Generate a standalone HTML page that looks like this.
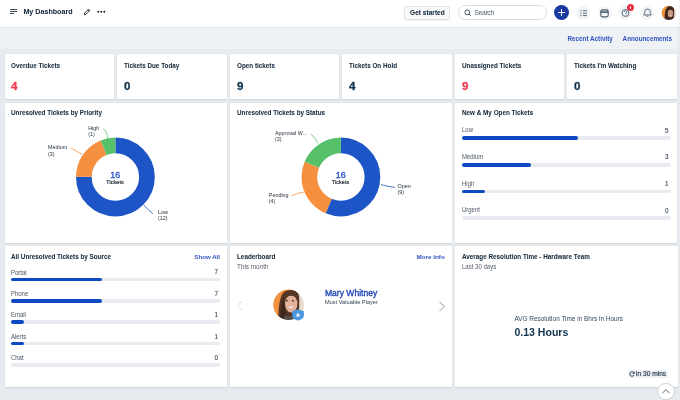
<!DOCTYPE html>
<html><head><meta charset="utf-8">
<style>
*{margin:0;padding:0;box-sizing:border-box}
html,body{width:680px;height:400px;overflow:hidden;background:#e7eaee;font-family:"Liberation Sans",sans-serif;color:#12344d}
.a{position:absolute;white-space:nowrap}
#hdr{position:absolute;left:0;top:0;width:680px;height:28px;background:#fff;border-bottom:1px solid #dfe3e8}
#sub{position:absolute;left:0;top:28px;width:680px;height:21px;background:#eff2f5}
.card{position:absolute;background:#fff;border-radius:1px;box-shadow:0 0.5px 1.2px rgba(18,52,77,.11)}
.t{font-weight:700;font-size:6.5px;letter-spacing:0;transform:scaleX(0.973);transform-origin:0 0;color:#13283b;line-height:1;-webkit-text-stroke:0.04px #13283b}
.lnk{font-weight:700;font-size:6.3px;color:#2f52c0;line-height:1}
.num{font-weight:700;font-size:10.5px;line-height:1;transform:scaleX(1.1);transform-origin:0 0;-webkit-text-stroke:0.3px currentColor}
.lbl{font-size:6.35px;color:#4a5561;line-height:1;transform:scaleX(0.94);transform-origin:0 0}
.track{position:absolute;height:3.6px;margin-top:-0.2px;border-radius:2px;background:#e8ebef}
.fill{position:absolute;left:0;top:0;height:3.6px;border-radius:2px;background:#0f49c2}
.val{width:20px;text-align:right;line-height:1;font-size:6.3px;color:#2c3e50;-webkit-text-stroke:0.08px #2c3e50}
.hic{position:absolute;width:14px;height:14px;border-radius:50%;background:#f3f5f8}
</style></head>
<body><div id="root" style="position:absolute;left:0;top:0;width:680px;height:400px;filter:blur(0.22px);will-change:transform">
<div id="hdr">
  <!-- hamburger -->
  <div class="a" style="left:9.5px;top:8.75px;width:7.4px;height:1.4px;background:#3a4c5f"></div>
  <div class="a" style="left:9.5px;top:10.85px;width:7.4px;height:1.4px;background:#3a4c5f"></div>
  <div class="a" style="left:9.5px;top:13.05px;width:4px;height:1.45px;background:#3a4c5f"></div>
  <div class="a t" style="left:23.4px;top:9.1px;font-size:7.15px;letter-spacing:0;transform:none">My Dashboard</div>
  <!-- pencil -->
  <svg class="a" style="left:83px;top:8px" width="8" height="8" viewBox="0 0 8 8"><path d="M1.2 6.8 L1.6 5.1 L5.6 1.1 L6.9 2.4 L2.9 6.4 Z M4.7 2 L6 3.3" fill="none" stroke="#2a2f35" stroke-width="0.95" stroke-linejoin="round"/></svg>
  <!-- dots -->
  <svg class="a" style="left:96.1px;top:10.4px" width="10" height="4" viewBox="0 0 10 4"><circle cx="2.3" cy="1.8" r="0.95" fill="#15191d"/><circle cx="5.3" cy="1.8" r="0.95" fill="#15191d"/><circle cx="8.3" cy="1.8" r="0.95" fill="#15191d"/></svg>
  <!-- get started -->
  <div class="a" style="left:404.2px;top:6px;width:45.5px;height:14px;border-radius:2px;background:#f7f9fb;border:0.7px solid #e0e5ea;box-shadow:0 0.5px 1px rgba(0,0,0,.05)"></div>
  <div class="a t" style="left:410px;top:10.2px;font-size:6.6px;letter-spacing:0;transform:none">Get started</div>
  <!-- search -->
  <div class="a" style="left:457.8px;top:5.3px;width:89px;height:14.4px;border-radius:7.2px;background:#fff;border:0.7px solid #d7dde4"></div>
  <svg class="a" style="left:464px;top:8.5px" width="8" height="8" viewBox="0 0 8 8"><circle cx="3.3" cy="3.3" r="2.4" fill="none" stroke="#475867" stroke-width="1"/><path d="M5 5 L6.8 6.8" stroke="#475867" stroke-width="1"/></svg>
  <div class="a" style="left:474.2px;top:10.3px;font-size:6.8px;letter-spacing:-0.3px;color:#4f5f6f;line-height:1">Search</div>
  <!-- plus -->
  <div class="a" style="left:554.1px;top:5.1px;width:15px;height:14.9px;border-radius:50%;background:#1a3a9f"></div>
  <div class="a" style="left:558.2px;top:12.2px;width:6.9px;height:1.1px;background:#f4f6fb"></div>
  <div class="a" style="left:561.1px;top:9.2px;width:1.1px;height:7px;background:#f4f6fb"></div>
  <!-- icons -->
  <div class="hic" style="left:576.2px;top:5.7px"></div>
  <svg class="a" style="left:579px;top:8.5px" width="9" height="9" viewBox="0 0 9 9"><path d="M3.9 1.8H8M3.9 4.2H8M3.9 6.6H8" stroke="#4a5a6a" stroke-width="0.9"/><path d="M0.9 1.6l0.7 0.6 1.1-1.1M0.9 4l0.7 0.6 1.1-1.1M0.9 6.4l0.7 0.6 1.1-1.1" stroke="#4a5a6a" stroke-width="0.75" fill="none"/></svg>
  <div class="hic" style="left:597.6px;top:5.7px"></div>
  <svg class="a" style="left:600.3px;top:8.6px" width="9" height="9" viewBox="0 0 9 9"><rect x="0.8" y="0.9" width="7.4" height="7" rx="1.6" fill="none" stroke="#4a5a6a" stroke-width="1.1"/><path d="M0.8 3.1H8.2" stroke="#4a5a6a" stroke-width="1.6"/></svg>
  <div class="hic" style="left:618.4px;top:5.6px"></div>
  <svg class="a" style="left:621.3px;top:9.3px" width="9" height="8" viewBox="0 0 9 8"><circle cx="4.5" cy="4" r="3.5" fill="none" stroke="#4a5a6a" stroke-width="0.9"/><path d="M3.3 3a1.2 1.2 0 1 1 1.6 1.1V5.3" fill="none" stroke="#4a5a6a" stroke-width="0.8"/><circle cx="4.9" cy="6.3" r="0.45" fill="#4a5a6a"/></svg>
  <div class="a" style="left:626.9px;top:3.9px;width:7.6px;height:7.6px;border-radius:50%;background:#e8303f"></div>
  <div class="a" style="left:630px;top:5.5px;width:1.4px;height:3.6px;background:#fff;border-radius:0.4px"></div>
  <div class="hic" style="left:640.1px;top:5.6px"></div>
  <svg class="a" style="left:642.6px;top:8.4px" width="9" height="9" viewBox="0 0 9 9"><path d="M0.7 7H8.3L7.3 5.6V3.8A2.8 2.8 0 0 0 1.7 3.8V5.6Z" fill="none" stroke="#4a5a6a" stroke-width="0.85" stroke-linejoin="round"/><path d="M3.5 8.2H5.5" stroke="#4a5a6a" stroke-width="0.9"/></svg>
  <!-- avatar -->
  <svg class="a" style="left:660.6px;top:5px" width="16" height="16" viewBox="0 0 34 34"><defs><clipPath id="av1"><circle cx="16.6" cy="16.8" r="15.3"/></clipPath><filter id="bl1"><feGaussianBlur stdDeviation="1.1"/></filter></defs><g clip-path="url(#av1)"><g filter="url(#bl1)">
    <rect x="-2" y="-2" width="38" height="38" fill="#f0923e"/>
    <rect x="25" y="-2" width="11" height="38" fill="#ddcbb8"/>
    <path d="M8 36 C7 24 8 8 14 4 C18 1 25 2 27 7 C28.5 12 27.5 20 27 36 Z" fill="#3f281e"/>
    <ellipse cx="20" cy="18" rx="5.6" ry="8.2" fill="#c79a82"/>
    <path d="M14 12 C15 6 25 6 26.5 12 C23 9 17 9 14 12Z" fill="#3f281e"/>
    <path d="M17 21.5 Q20 24.5 23 21.5Z" fill="#f2e6de"/>
    <rect x="12" y="29" width="14" height="7" fill="#2f2622"/>
  </g></g></svg>
</div>
<div id="sub">
  <div class="a lnk" style="left:567.5px;top:8.2px">Recent Activity</div>
  <div class="a lnk" style="left:622.6px;top:8.2px">Announcements</div>
</div>

<div class="a" style="left:678px;top:0;width:2px;height:49px;background:rgba(20,40,60,0.035)"></div>
<!-- KPI cards -->
<div class="card" style="left:4.6px;top:54px;width:109.7px;height:45px"></div>
<div class="card" style="left:117.1px;top:54px;width:109.7px;height:45px"></div>
<div class="card" style="left:229.6px;top:54px;width:109.7px;height:45px"></div>
<div class="card" style="left:342.1px;top:54px;width:109.7px;height:45px"></div>
<div class="card" style="left:454.6px;top:54px;width:109.7px;height:45px"></div>
<div class="card" style="left:567.1px;top:54px;width:109.7px;height:45px"></div>

<div class="a t" style="left:11px;top:62.7px">Overdue Tickets</div>
<div class="a t" style="left:124px;top:62.7px">Tickets Due Today</div>
<div class="a t" style="left:236.5px;top:62.7px">Open tickets</div>
<div class="a t" style="left:349px;top:62.7px">Tickets On Hold</div>
<div class="a t" style="left:461.5px;top:62.7px">Unassigned Tickets</div>
<div class="a t" style="left:574px;top:62.7px">Tickets I'm Watching</div>

<div class="a num" style="left:11px;top:81.1px;color:#f33a50">4</div>
<div class="a num" style="left:124px;top:81.1px">0</div>
<div class="a num" style="left:236.5px;top:81.1px">9</div>
<div class="a num" style="left:349px;top:81.1px">4</div>
<div class="a num" style="left:461.5px;top:81.1px;color:#f33a50">9</div>
<div class="a num" style="left:574px;top:81.1px">0</div>

<!-- Row 2 -->
<div class="card" style="left:4.7px;top:102.7px;width:222px;height:140.3px"></div>
<div class="card" style="left:229.7px;top:102.7px;width:222.3px;height:140.3px"></div>
<div class="card" style="left:455px;top:102.7px;width:222px;height:140.3px"></div>

<div class="a t" style="left:10.9px;top:110px">Unresolved Tickets by Priority</div>
<div class="a t" style="left:236.5px;top:110px">Unresolved Tickets by Status</div>
<div class="a t" style="left:461.7px;top:110px">New &amp; My Open Tickets</div>

<!-- donut 1 -->
<svg class="a" style="left:0;top:100px" width="227" height="142" viewBox="0 100 227 142">
  <g transform="rotate(-90 115.4 177)">
    <circle cx="115.4" cy="177" r="31.55" fill="none" stroke="#1d55c7" stroke-width="15.7" stroke-dasharray="148.67 198.23" stroke-dashoffset="0"/>
    <circle cx="115.4" cy="177" r="31.55" fill="none" stroke="#f6903f" stroke-width="15.7" stroke-dasharray="37.17 198.23" stroke-dashoffset="-148.67"/>
    <circle cx="115.4" cy="177" r="31.55" fill="none" stroke="#57c06b" stroke-width="15.7" stroke-dasharray="12.39 198.23" stroke-dashoffset="-185.84"/>
  </g>
  <path d="M143.7 204.8 Q148 210 152.7 213.5" fill="none" stroke="#1d55c7" stroke-width="0.8"/>
  <path d="M70.9 148 Q77 151 82.2 154.5" fill="none" stroke="#f6903f" stroke-width="0.8"/>
  <path d="M103 128.75 Q107 130 107.5 138.5" fill="none" stroke="#57c06b" stroke-width="0.8"/>
</svg>
<div class="a" style="left:110.3px;top:170.8px;font-weight:400;font-size:8.9px;color:#2a55c4;line-height:1;-webkit-text-stroke:0.35px #2a55c4">16</div>
<div class="a" style="left:106.2px;top:179.6px;font-weight:400;font-size:5.3px;letter-spacing:0.15px;color:#1c2630;line-height:1;-webkit-text-stroke:0.2px #1c2630">Tickets</div>
<div class="a" style="left:88.2px;top:124.9px;font-size:5.4px;line-height:1.18;color:#27333f">High<br>(1)</div>
<div class="a" style="left:48px;top:144.2px;font-size:5.4px;line-height:1.18;color:#27333f">Medium<br>(3)</div>
<div class="a" style="left:158px;top:208.7px;font-size:5.4px;line-height:1.18;color:#27333f">Low<br>(12)</div>

<!-- donut 2 -->
<svg class="a" style="left:229px;top:100px" width="223" height="142" viewBox="229 100 223 142">
  <g transform="rotate(-90 340.9 177)">
    <circle cx="340.9" cy="177" r="31.55" fill="none" stroke="#1d55c7" stroke-width="15.7" stroke-dasharray="111.5 198.23" stroke-dashoffset="0"/>
    <circle cx="340.9" cy="177" r="31.55" fill="none" stroke="#f6903f" stroke-width="15.7" stroke-dasharray="49.56 198.23" stroke-dashoffset="-111.5"/>
    <circle cx="340.9" cy="177" r="31.55" fill="none" stroke="#57c06b" stroke-width="15.7" stroke-dasharray="37.17 198.23" stroke-dashoffset="-161.06"/>
  </g>
  <path d="M381 184.6 Q388 186.5 394.8 187.4" fill="none" stroke="#1d55c7" stroke-width="0.8"/>
  <path d="M291.6 195.6 Q298 193 304 192" fill="none" stroke="#f6903f" stroke-width="0.8"/>
  <path d="M310.9 133.75 Q315 138 318.3 143.4" fill="none" stroke="#57c06b" stroke-width="0.8"/>
</svg>
<div class="a" style="left:335.8px;top:170.8px;font-weight:400;font-size:8.9px;color:#2a55c4;line-height:1;-webkit-text-stroke:0.35px #2a55c4">16</div>
<div class="a" style="left:331.7px;top:179.6px;font-weight:400;font-size:5.3px;letter-spacing:0.15px;color:#1c2630;line-height:1;-webkit-text-stroke:0.2px #1c2630">Tickets</div>
<div class="a" style="left:275px;top:129.6px;font-size:5.4px;line-height:1.18;color:#27333f">Approval W...<br>(3)</div>
<div class="a" style="left:268.8px;top:191.5px;font-size:5.4px;line-height:1.18;color:#27333f">Pending<br>(4)</div>
<div class="a" style="left:397.5px;top:182.5px;font-size:5.4px;line-height:1.18;color:#27333f">Open<br>(9)</div>

<!-- New & my open tickets -->
<div class="a lbl" style="left:461.7px;top:127.4px">Low</div>
<div class="a val" style="left:648.6px;top:127.5px">5</div>
<div class="track" style="left:461.7px;top:136.4px;width:209px"><div class="fill" style="width:116px"></div></div>
<div class="a lbl" style="left:461.7px;top:154.2px">Medium</div>
<div class="a val" style="left:648.6px;top:154.2px">3</div>
<div class="track" style="left:461.7px;top:163.1px;width:209px"><div class="fill" style="width:69.7px"></div></div>
<div class="a lbl" style="left:461.7px;top:180.9px">High</div>
<div class="a val" style="left:648.6px;top:180.9px">1</div>
<div class="track" style="left:461.7px;top:189.8px;width:209px"><div class="fill" style="width:23.2px"></div></div>
<div class="a lbl" style="left:461.7px;top:207.2px">Urgent</div>
<div class="a val" style="left:648.6px;top:207.6px">0</div>
<div class="track" style="left:461.7px;top:216.5px;width:209px"></div>

<!-- Row 3 -->
<div class="card" style="left:4.7px;top:246.3px;width:222px;height:140.9px"></div>
<div class="card" style="left:229.7px;top:246.3px;width:222.3px;height:140.9px"></div>
<div class="card" style="left:455px;top:246.3px;width:222.5px;height:140.9px"></div>

<div class="a t" style="left:10.9px;top:254.1px">All Unresolved Tickets by Source</div>
<div class="a lnk" style="left:194.3px;top:254px;font-size:6.15px">Show All</div>
<div class="a lbl" style="left:10.9px;top:269.5px">Portal</div>
<div class="a val" style="left:198.0px;top:269.4px">7</div>
<div class="track" style="left:10.9px;top:277.8px;width:208.8px"><div class="fill" style="width:91.3px"></div></div>
<div class="a lbl" style="left:10.9px;top:290.9px">Phone</div>
<div class="a val" style="left:198.0px;top:290.8px">7</div>
<div class="track" style="left:10.9px;top:299.2px;width:208.8px"><div class="fill" style="width:91.3px"></div></div>
<div class="a lbl" style="left:10.9px;top:312.0px">Email</div>
<div class="a val" style="left:198.0px;top:312.2px">1</div>
<div class="track" style="left:10.9px;top:320.6px;width:208.8px"><div class="fill" style="width:13px"></div></div>
<div class="a lbl" style="left:10.9px;top:333.6px">Alerts</div>
<div class="a val" style="left:198.0px;top:333.6px">1</div>
<div class="track" style="left:10.9px;top:342px;width:208.8px"><div class="fill" style="width:13px"></div></div>
<div class="a lbl" style="left:10.9px;top:355.0px">Chat</div>
<div class="a val" style="left:198.0px;top:355.0px">0</div>
<div class="track" style="left:10.9px;top:363.4px;width:208.8px"></div>

<!-- Leaderboard -->
<div class="a t" style="left:236.5px;top:254.1px">Leaderboard</div>
<div class="a lnk" style="left:416.6px;top:254px;font-size:6.25px">More Info</div>
<div class="a" style="left:236.5px;top:263.9px;font-size:6.7px;color:#56606b;transform:scaleX(0.95);transform-origin:0 0;line-height:1">This month</div>
<svg class="a" style="left:236px;top:300px" width="8" height="12" viewBox="0 0 8 12"><path d="M6 1 L1.5 5.6 L6 10.2" fill="none" stroke="#d5dae0" stroke-width="1"/></svg>
<svg class="a" style="left:438px;top:300.5px" width="9" height="12" viewBox="0 0 9 12"><path d="M1.5 1 L6.5 5.6 L1.5 10.2" fill="none" stroke="#b4bcc5" stroke-width="1.1"/></svg>
<svg class="a" style="left:272px;top:288px" width="34" height="34" viewBox="0 0 34 34">
  <defs><clipPath id="av2"><circle cx="16.6" cy="16.8" r="15.3"/></clipPath><filter id="bl2"><feGaussianBlur stdDeviation="0.7"/></filter></defs>
  <g clip-path="url(#av2)"><g filter="url(#bl2)">
    <rect x="-2" y="-2" width="38" height="38" fill="#f2913c"/>
    <rect x="24" y="-2" width="12" height="38" fill="#e9dccd"/>
    <path d="M6.5 36 C6 24 7 8 12 4 C16 1 24 1 26.5 6 C28 10 27 20 26.5 36 Z" fill="#553625"/>
    <path d="M9 36 C8 26 9 14 12 10 L14 36Z" fill="#3d261b"/>
    <ellipse cx="19.2" cy="15.8" rx="6.2" ry="8.6" fill="#e2b39a"/>
    <path d="M12 10 C14 4 24 4 26 10 C22 7 16 7 12 10Z" fill="#5a3a28"/>
    <ellipse cx="14.8" cy="12.8" rx="1.2" ry="0.7" fill="#3a2218"/>
    <ellipse cx="21" cy="12.8" rx="1.2" ry="0.7" fill="#3a2218"/>
    <path d="M15.5 18.3 Q19 21.8 22.5 18.3 Q19 19.3 15.5 18.3Z" fill="#fff"/>
    <rect x="12" y="28" width="12" height="8" fill="#55504e"/>
  </g></g>
  <path d="M26 21.3 L31.9 23.2 L31.9 27.2 C31.9 30 29.5 31.6 26 32.6 C22.5 31.6 20.1 30 20.1 27.2 L20.1 23.2 Z" fill="#4c97dd"/>
  <path d="M26 24.6 L26.7 26.4 L28.5 26.4 L27.1 27.5 L27.6 29.3 L26 28.2 L24.4 29.3 L24.9 27.5 L23.5 26.4 L25.3 26.4 Z" fill="#fff"/>
</svg>
<div class="a" style="left:324.9px;top:288.5px;font-weight:400;font-size:9.2px;color:#2546b8;line-height:1;-webkit-text-stroke:0.38px #2546b8;transform:scaleX(0.93);transform-origin:0 0">Mary Whitney</div>
<div class="a" style="left:324.9px;top:299.3px;font-size:6.1px;color:#2c3e50;line-height:1;transform:scaleX(0.925);transform-origin:0 0">Most Valuable Player</div>

<!-- Avg resolution -->
<div class="a t" style="left:461.5px;top:254.1px">Average Resolution Time - Hardware Team</div>
<div class="a" style="left:461.5px;top:264.1px;font-size:6.6px;color:#515b66;line-height:1;transform:scaleX(0.915);transform-origin:0 0">Last 30 days</div>
<div class="a" style="left:514.4px;top:315.8px;font-size:6.45px;color:#33475b;line-height:1">AVG Resolution Time in Bhrs in Hours</div>
<div class="a" style="left:514.4px;top:326.5px;font-weight:700;font-size:10.56px;color:#12344d;line-height:1">0.13 Hours</div>
<div class="a" style="left:627.5px;top:369.8px;width:40.2px;height:8.2px;background:#eef1f4;border-radius:1px"></div>
<svg class="a" style="left:628.9px;top:371.1px" width="6" height="6" viewBox="0 0 6 6"><path d="M5.1 2.2 A2.2 2.2 0 1 0 5.1 3.9" fill="none" stroke="#2c3e50" stroke-width="1"/><path d="M5.3 0.6 V2.4 H3.5" fill="none" stroke="#2c3e50" stroke-width="0.8"/></svg>
<div class="a" style="left:635.7px;top:370.9px;font-size:6.6px;color:#2c3e50;line-height:1;-webkit-text-stroke:0.18px #2c3e50">In 30 mins</div>

<!-- scroll top -->
<div class="a" style="left:657.4px;top:382.8px;width:17.3px;height:17.3px;border-radius:50%;background:#fff;border:0.8px solid #c9d0d8"></div>
<svg class="a" style="left:661px;top:387px" width="10" height="8" viewBox="0 0 10 8"><path d="M1.4 6.2 L5 2.6 L8.6 6.2" fill="none" stroke="#56677a" stroke-width="1"/></svg>
</div></body></html>
